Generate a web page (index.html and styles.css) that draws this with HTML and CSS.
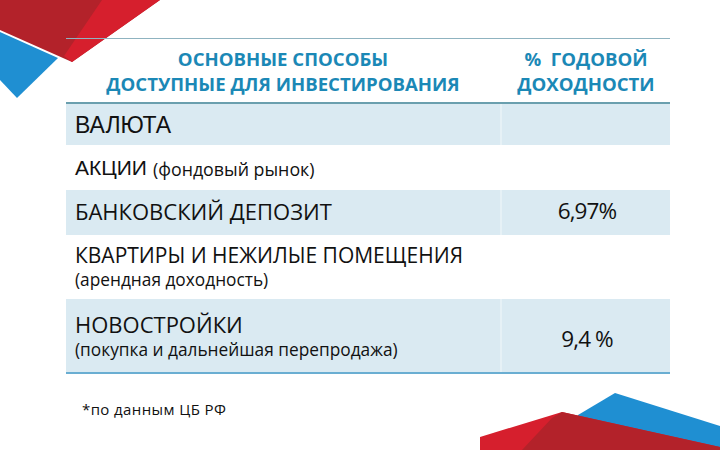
FILE: index.html
```html
<!DOCTYPE html>
<html lang="ru">
<head>
<meta charset="utf-8">
<link rel="stylesheet" href="styles.css">
</head>
<body>
<div class="slide">
  <svg class="deco deco-tl" width="170" height="100" viewBox="0 0 170 100">
    <polygon points="0,32 58,58 17,98 0,80" fill="#1f8fd2"/>
    <polygon points="0,0 160,0 72,62 0,30" fill="#b3222a"/>
    <polygon points="102,0 160,0 72,62 64,56" fill="#d61f2d"/>
  </svg>
  <svg class="deco deco-br" width="240" height="70" viewBox="480 380 240 70">
    <polygon points="615,393 720,426 720,450 578,450 578,415" fill="#1f8fd2"/>
    <polygon points="480,437 562,412 720,447 720,450 480,450" fill="#d61f2d"/>
    <polygon points="552,418 562,412 720,447 720,450 522,450" fill="#b3222a"/>
  </svg>

  <div class="table">
    <div class="row head">
      <div class="c1 h">ОСНОВНЫЕ СПОСОБЫ<br>ДОСТУПНЫЕ ДЛЯ ИНВЕСТИРОВАНИЯ</div>
      <div class="c2 h">%&nbsp; ГОДОВОЙ<br>ДОХОДНОСТИ</div>
    </div>
    <div class="row blue r1">
      <div class="c1"><span class="big arial">ВАЛЮТА</span></div>
      <div class="c2"></div>
    </div>
    <div class="row r2">
      <div class="c1"><span class="big arial2">АКЦИИ</span> <span class="small">(фондовый рынок)</span></div>
      <div class="c2"></div>
    </div>
    <div class="row blue r3">
      <div class="c1"><span class="big">БАНКОВСКИЙ ДЕПОЗИТ</span></div>
      <div class="c2"><span class="num">6,97%</span></div>
    </div>
    <div class="row r4">
      <div class="c1 stack"><span class="mid">КВАРТИРЫ И НЕЖИЛЫЕ ПОМЕЩЕНИЯ</span><span class="small">(арендная доходность)</span></div>
      <div class="c2"></div>
    </div>
    <div class="row blue r5">
      <div class="c1 stack"><span class="big">НОВОСТРОЙКИ</span><span class="small">(покупка и дальнейшая перепродажа)</span></div>
      <div class="c2"><span class="num">9,4 %</span></div>
    </div>
  </div>

  <p class="note">*по данным ЦБ РФ</p>
</div>
</body>
</html>
```

FILE: styles.css
```css
html, body {
  margin: 0;
  padding: 0;
  background: #ffffff;
}
.slide {
  position: relative;
  width: 720px;
  height: 450px;
  overflow: hidden;
  background: #ffffff;
  font-family: "Open Sans", "Noto Sans", sans-serif;
  color: #111111;
  padding-top: 38px;
  box-sizing: border-box;
}
.deco {
  position: absolute;
  display: block;
}
.deco-tl { left: 0; top: 0; }
.deco-br { left: 480px; top: 380px; }

.table {
  position: relative;
  margin-left: 66px;
  width: 604px;
  border-top: 1px solid #8fb3c0;
  border-bottom: 2px solid #6aaed2;
}
.row {
  display: flex;
}
.row.blue { background: #daeaf2; }
.c1 {
  width: 434px;
  box-sizing: border-box;
  padding-left: 9px;
  display: flex;
  align-items: center;
}
.c2 {
  flex: 1;
  box-sizing: border-box;
  display: flex;
  align-items: center;
  justify-content: center;
  border-left: 2px solid transparent;
}
.row.blue .c2 { border-left-color: #e6f1f6; }
.head { height: 63px; border-bottom: 2px solid #6a9fae; }
.h {
  justify-content: center;
  text-align: center;
  padding-left: 0;
  font-weight: 700;
  font-size: 18.6px;
  line-height: 25px;
  color: #1b88b6;
}
.r1 { height: 41px; }
.r2 { height: 45px; }
.r3 { height: 45px; }
.r4 { height: 64px; }
.r5 { height: 73px; }
.stack {
  flex-direction: column;
  align-items: flex-start;
  justify-content: center;
}
.big { font-size: 22px; line-height: 26px; }
.arial { font-family: "Liberation Sans", Arial, sans-serif; font-size: 23px; }
.arial2 { font-family: "Liberation Sans", Arial, sans-serif; font-size: 21px; }
.mid { font-size: 21px; line-height: 25px; }
.small { font-size: 17.3px; line-height: 22px; }
.r2 .small { margin-left: 6px; padding-top: 3px; font-size: 17.8px; }
.r4 .small { margin-top: 1px; }
.r5 .small { margin-top: 2px; }
.num { font-size: 22.5px; letter-spacing: -0.9px; margin-left: 2px; }
.r3 .big, .r3 .num { padding-bottom: 4px; }
.r5 .num { padding-top: 6px; }
.note {
  margin: 25px 0 0 82px;
  font-size: 15px;
  letter-spacing: 0.4px;
}
```
